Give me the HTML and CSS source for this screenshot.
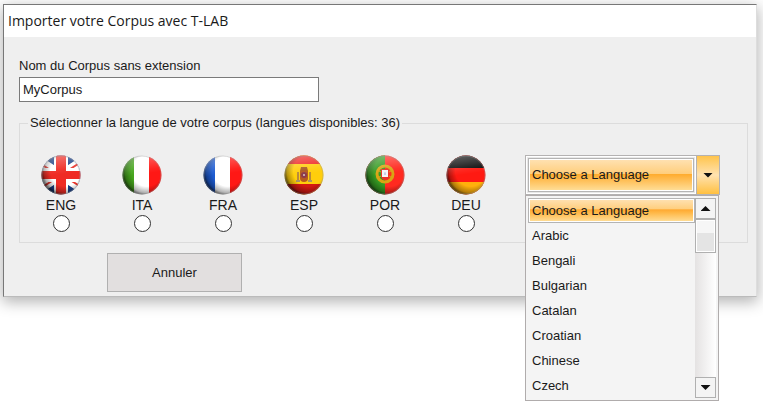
FILE: index.html
```html
<!DOCTYPE html>
<html lang="fr">
<head>
    <meta charset="UTF-8">
    <meta name="viewport" content="width=device-width, initial-scale=1.0">
    <title>Importer votre Corpus avec T-LAB</title>
    <link rel="stylesheet" href="styles.css">
</head>
<body>
    <!-- shared shading for the round flags -->
    <svg class="defs" width="0" height="0" aria-hidden="true">
        <defs>
            <clipPath id="round"><circle cx="20" cy="20" r="19.5"/></clipPath>
            <radialGradient id="shade" cx="0.62" cy="0.4" r="0.65">
                <stop offset="0.6" stop-color="#000" stop-opacity="0"/>
                <stop offset="0.85" stop-color="#000" stop-opacity="0.3"/>
                <stop offset="1" stop-color="#000" stop-opacity="0.75"/>
            </radialGradient>
            <linearGradient id="gloss" x1="0.3" y1="0" x2="0.45" y2="1">
                <stop offset="0" stop-color="#fff" stop-opacity="0.35"/>
                <stop offset="0.4" stop-color="#fff" stop-opacity="0.05"/>
                <stop offset="0.5" stop-color="#fff" stop-opacity="0"/>
            </linearGradient>
            <g id="ball">
                <circle cx="20" cy="20" r="19.5" fill="url(#shade)"/>
                <circle cx="20" cy="20" r="19.5" fill="url(#gloss)"/>
                <circle cx="20" cy="20" r="19" fill="none" stroke="#999" stroke-opacity="0.4"/>
            </g>
        </defs>
    </svg>

    <div class="window">
        <h1 class="title">Importer votre Corpus avec T-LAB</h1>
        <form class="content">
            <label class="name-label" for="corpus">Nom du Corpus sans extension</label>
            <input class="name" type="text" id="corpus" value="MyCorpus">

            <fieldset class="languages">
                <legend>Sélectionner la langue de votre corpus (langues disponibles: 36)</legend>
                <div class="choices">
                    <div class="flags">
                        <label class="lang">
                            <svg class="flag" viewBox="0 0 40 40" aria-hidden="true">
                                <g clip-path="url(#round)">
                                    <rect width="40" height="40" fill="#173f86"/>
                                    <path d="M0 7L40 33M40 7L0 33" stroke="#fff" stroke-width="9"/>
                                    <path d="M0 9L14 18M40 7L26 16M26 23L40 32M0 33L14 24" stroke="#e8352c" stroke-width="2"/>
                                    <path d="M20 0V40M0 20H40" stroke="#fff" stroke-width="14"/>
                                    <path d="M20 0V40" stroke="#ef2b24" stroke-width="10"/>
                                    <path d="M0 20H40" stroke="#ef2b24" stroke-width="8"/>
                                </g>
                                <use href="#ball"/>
                            </svg>
                            <span>ENG</span>
                            <input type="radio" name="lang" value="eng">
                        </label>
                        <label class="lang">
                            <svg class="flag" viewBox="0 0 40 40" aria-hidden="true">
                                <g clip-path="url(#round)">
                                    <rect width="40" height="40" fill="#fff"/>
                                    <rect width="12" height="40" fill="#45a51c"/>
                                    <rect x="27" width="13" height="40" fill="#ff1815"/>
                                </g>
                                <use href="#ball"/>
                            </svg>
                            <span>ITA</span>
                            <input type="radio" name="lang" value="ita">
                        </label>
                        <label class="lang">
                            <svg class="flag" viewBox="0 0 40 40" aria-hidden="true">
                                <g clip-path="url(#round)">
                                    <rect width="40" height="40" fill="#fff"/>
                                    <rect width="12" height="40" fill="#1c5ad0"/>
                                    <rect x="27" width="13" height="40" fill="#ff1815"/>
                                </g>
                                <use href="#ball"/>
                            </svg>
                            <span>FRA</span>
                            <input type="radio" name="lang" value="fra">
                        </label>
                        <label class="lang">
                            <svg class="flag" viewBox="0 0 40 40" aria-hidden="true">
                                <g clip-path="url(#round)">
                                    <rect width="40" height="40" fill="#ffce0c"/>
                                    <rect width="40" height="9" fill="#ee2420"/>
                                    <rect y="29" width="40" height="11" fill="#d41a12"/>
                                    <path d="M14 17V26M26 17V26" stroke="#b98a3c" stroke-width="2"/>
                                    <path d="M12 26H16M24 26H28" stroke="#a89468" stroke-width="2"/>
                                    <path d="M16 16H24V23Q24 27 20 27Q16 27 16 23Z" fill="#b65a1e"/>
                                    <path d="M17 12H23L24 16H16Z" fill="#a85a20"/>
                                    <circle cx="20" cy="20" r="3" fill="#8c3a4c"/>
                                    <circle cx="20" cy="20" r="1" fill="#d8c8c0"/>
                                </g>
                                <use href="#ball"/>
                            </svg>
                            <span>ESP</span>
                            <input type="radio" name="lang" value="esp">
                        </label>
                        <label class="lang">
                            <svg class="flag" viewBox="0 0 40 40" aria-hidden="true">
                                <g clip-path="url(#round)">
                                    <rect width="40" height="40" fill="#ff2a20"/>
                                    <rect width="20" height="40" fill="#359a22"/>
                                    <circle cx="20" cy="19" r="8" fill="none" stroke="#d9a414" stroke-width="3"/>
                                    <path d="M12 15L28 23M12 23L28 15" stroke="#d9a414"/>
                                    <path d="M16 14H24V20Q24 25 20 25Q16 25 16 20Z" fill="#e83428"/>
                                    <rect x="17" y="15" width="6" height="7" fill="#f4f4f8"/>
                                    <path d="M20 17V20M19 19H21" stroke="#b8c4e0"/>
                                </g>
                                <use href="#ball"/>
                            </svg>
                            <span>POR</span>
                            <input type="radio" name="lang" value="por">
                        </label>
                        <label class="lang">
                            <svg class="flag" viewBox="0 0 40 40" aria-hidden="true">
                                <g clip-path="url(#round)">
                                    <rect width="40" height="40" fill="#ff1a12"/>
                                    <rect width="40" height="13" fill="#0c0c0c"/>
                                    <rect y="27" width="40" height="13" fill="#ffb00c"/>
                                </g>
                                <use href="#ball"/>
                            </svg>
                            <span>DEU</span>
                            <input type="radio" name="lang" value="deu">
                        </label>
                    </div>

                    <div class="combo">
                        <select class="combo-box" id="other" aria-label="Choose a Language">
                            <option>Choose a Language</option>
                            <option>Arabic</option>
                            <option>Bengali</option>
                            <option>Bulgarian</option>
                            <option>Catalan</option>
                            <option>Croatian</option>
                            <option>Chinese</option>
                            <option>Czech</option>
                        </select>
                        <span class="combo-arrow"><span class="down"></span></span>
                        <div class="menu">
                            <ul class="items">
                                <li class="selected">Choose a Language</li>
                                <li>Arabic</li>
                                <li>Bengali</li>
                                <li>Bulgarian</li>
                                <li>Catalan</li>
                                <li>Croatian</li>
                                <li>Chinese</li>
                                <li>Czech</li>
                            </ul>
                            <div class="scroll">
                                <button type="button" aria-label="Up"><span class="up"></span></button>
                                <div class="thumb"></div>
                                <button type="button" class="last" aria-label="Down"><span class="down"></span></button>
                            </div>
                        </div>
                    </div>
                </div>
            </fieldset>

            <button type="button" class="cancel">Annuler</button>
        </form>
    </div>

    <script>
        const items = document.querySelectorAll('.items li');
        const other = document.getElementById('other');

        function pick(index) {
            items.forEach((item, i) => item.classList.toggle('selected', i === index));
            other.selectedIndex = index;
        }

        items.forEach((item, i) => item.addEventListener('click', () => pick(i)));
        other.addEventListener('change', () => pick(other.selectedIndex));
    </script>
</body>
</html>
```
FILE: styles.css
```css
* {
    box-sizing: border-box;
}

body {
    min-height: 100vh;
    margin: 0;
    padding: 4px 6px 4px 3px;
    background-color: #fff;
    font-family: "Liberation Sans", Arial, sans-serif;
    font-size: 13px;
    line-height: 16px;
    color: #1a1a1a;
}

.defs {
    position: absolute;
}

.window {
    background-color: #efefef;
    border: 1px solid #777;
    border-right-color: #ddd;
    border-bottom-color: #bbb;
    box-shadow: 0 4px 14px 1px rgba(0, 0, 0, 0.3);
}

.title {
    margin: 0;
    padding: 0 4px;
    background-color: #fff;
    font-family: "Open Sans", "Noto Sans", sans-serif;
    font-size: 14px;
    font-weight: normal;
    line-height: 32px;
}

.content {
    padding: 21px 8px 4px 15px;
}

.name-label {
    display: block;
}

.name {
    display: block;
    width: 300px;
    height: 25px;
    margin-top: 3px;
    padding: 0 3px;
    border: 1px solid #7a7a7a;
    background-color: #fff;
    font: inherit;
    color: inherit;
}

.languages {
    min-width: 0;
    margin: 13px 0 0;
    padding: 24px 27px 10px 21px;
    border: 1px solid #dcdcdc;
}

.languages legend {
    margin-left: -13px;
    padding: 0 2px;
}

.choices {
    display: flex;
    align-items: flex-start;
    justify-content: space-between;
}

.flags {
    display: flex;
    gap: 41px;
}

.lang {
    display: flex;
    flex-direction: column;
    align-items: center;
    width: 40px;
    font-size: 14px;
}

.flag {
    width: 40px;
    height: 40px;
}

.lang span {
    margin: 2px 0;
}

.lang input {
    appearance: none;
    width: 17px;
    height: 17px;
    margin: 0;
    border: 1px solid #333;
    border-radius: 50%;
    background-color: #fff;
}

.lang input:checked {
    background: radial-gradient(#222 35%, #fff 45%);
}

.combo {
    position: relative;
    display: flex;
    width: 195px;
    height: 40px;
    border: 1px solid #b4b2b2;
    background-color: #fff;
}

.combo-box {
    appearance: none;
    flex: 1;
    min-width: 0;
    margin: 2px;
    padding: 0 3px;
    border: 1px solid #b4b4b4;
    border-radius: 0;
    outline: 1px solid #e8e8e8;
    background: linear-gradient(#ffe2b4, #ffce7c 46%, #ffab2c 47%, #ffb848 60%, #ffe09c);
    box-shadow: inset 0 0 0 1px #fff;
    font: inherit;
    color: inherit;
}

.combo-arrow {
    display: flex;
    align-items: center;
    justify-content: center;
    width: 23px;
    border-left: 1px solid #b4b2b2;
    background: linear-gradient(#ffc44c, #ffe2b0 50%, #ffc040);
    pointer-events: none;
}

.up,
.down {
    width: 10px;
    height: 5px;
    background-color: #111;
    clip-path: polygon(0 0, 100% 0, 50% 100%);
}

.up {
    clip-path: polygon(50% 0, 100% 100%, 0 100%);
}

.menu {
    position: absolute;
    top: 39px;
    left: -1px;
    display: flex;
    width: 194px;
    padding: 2px;
    border: 1px solid #b0acac;
    background-color: #f4f4f4;
}

.items {
    flex: 1;
    margin: 0;
    padding: 0;
    list-style: none;
}

.items li {
    padding: 0 3px;
    border: 1px solid transparent;
    line-height: 23px;
}

.items .selected {
    border-color: #b4b4b4;
    background: linear-gradient(#ffe2b4, #ffce7c 45%, #ffa830 46%, #ffb848 60%, #ffe09c);
    box-shadow: inset 0 0 0 1px #fff;
}

.scroll {
    display: flex;
    flex-direction: column;
    width: 21px;
    background: linear-gradient(to right, #e4e2e2, #fff);
}

.scroll button {
    display: flex;
    align-items: center;
    justify-content: center;
    height: 21px;
    padding: 0;
    border: 1px solid #b0b0b0;
    background-color: #f4f4f4;
}

.scroll .last {
    margin-top: auto;
}

.thumb {
    height: 34px;
    border: 1px solid #b0b0b0;
    background: linear-gradient(#f6f6f6 40%, #e4e4e4 41%);
    box-shadow: inset 0 0 0 1px #fff;
}

.cancel {
    display: block;
    width: 135px;
    height: 39px;
    margin: 10px 0 0 88px;
    padding: 0;
    border: 1px solid #b0b0b0;
    background-color: #e2dfdf;
    font: inherit;
    color: inherit;
}
```
